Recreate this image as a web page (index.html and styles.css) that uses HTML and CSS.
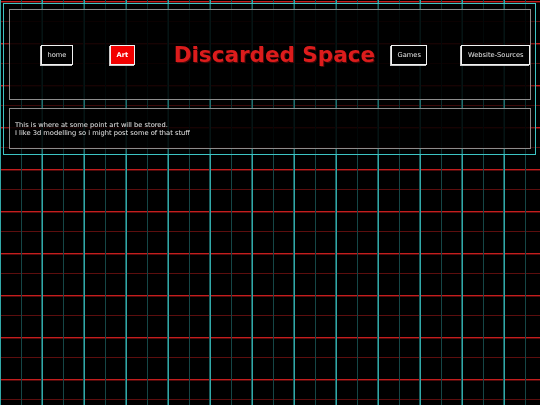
FILE: index.html
```html
<!DOCTYPE html>
<html lang="en">
<head>
<meta charset="utf-8">
<title>Discarded Space - Art</title>
<link rel="stylesheet" href="styles.css">
</head>
<body>
<div class="frame">
  <header class="top">
    <a class="btn btn-home" href="#">home</a>
    <a class="btn btn-art active" href="#">Art</a>
    <h1 class="title">Discarded Space</h1>
    <a class="btn btn-games" href="#">Games</a>
    <a class="btn btn-sources" href="#">Website-Sources</a>
  </header>
  <section class="panel">
    <p class="panel-text">This is where at some point art will be stored.<br>I like 3d modelling so i might post some of that stuff</p>
  </section>
</div>
</body>
</html>
```
FILE: styles.css
```css
html, body {
  margin: 0;
  padding: 0;
}
body {
  width: 540px;
  height: 405px;
  background-color: #000;
  background-image:
    linear-gradient(90deg,
      transparent 20px,
      #154646 20px, #154646 21px,
      transparent 21px, transparent 40px,
      #1a5f5f 40px, #1a5f5f 41px,
      #32a8a8 41px, #32a8a8 42px),
    linear-gradient(180deg,
      #c41e1e 0, #c41e1e 1px,
      #500a0a 1px, #500a0a 2px,
      transparent 2px, transparent 20px,
      #5c0e0e 20px, #5c0e0e 21px,
      transparent 21px);
  background-size: 42px 42px, 42px 42px;
  background-position: 1px 0, 0 1px;
  font-family: "DejaVu Sans", Verdana, sans-serif;
  color: #e6e6e6;
  overflow: hidden;
}
.frame {
  margin: 3px 4px 0 3px;
  border: 1px solid #3cc4c4;
  padding: 5px 4px 5px 5px;
  background: rgba(0, 0, 0, 0.35);
  will-change: transform;
}
.top {
  box-sizing: border-box;
  height: 91px;
  border: 1px solid #8c8c8c;
  background: rgba(0, 0, 0, 0.82);
  display: flex;
  align-items: center;
  padding-left: 31px;
  white-space: nowrap;
}
.btn {
  display: block;
  font-size: 6.7px;
  line-height: 8px;
  padding: 5px 5.5px;
  border: 1px solid #f2f2f2;
  box-shadow: -1px 1px 0 #c8c8c8;
  color: #e6e6e6;
  text-decoration: none;
  background: #000;
}
.btn.active {
  background: #f20000;
  color: #fff;
  font-weight: bold;
}
.btn-art { margin-left: 37px; }
.btn-games { margin-left: 16px; }
.btn-sources { margin-left: 34px; }
.title {
  margin: 0 0 0 39px;
  font-size: 21.5px;
  line-height: 26px;
  font-weight: bold;
  color: #dc1c1c;
  text-shadow: 1px 1px 0 #4a0808;
}
.panel {
  box-sizing: border-box;
  height: 41px;
  margin-top: 8px;
  border: 1px solid #8c8c8c;
  background: rgba(0, 0, 0, 0.82);
  padding: 12px 5px 0 5px;
}
.panel-text {
  margin: 0;
  font-size: 6.7px;
  line-height: 8px;
  color: #e6e6e6;
}
```
